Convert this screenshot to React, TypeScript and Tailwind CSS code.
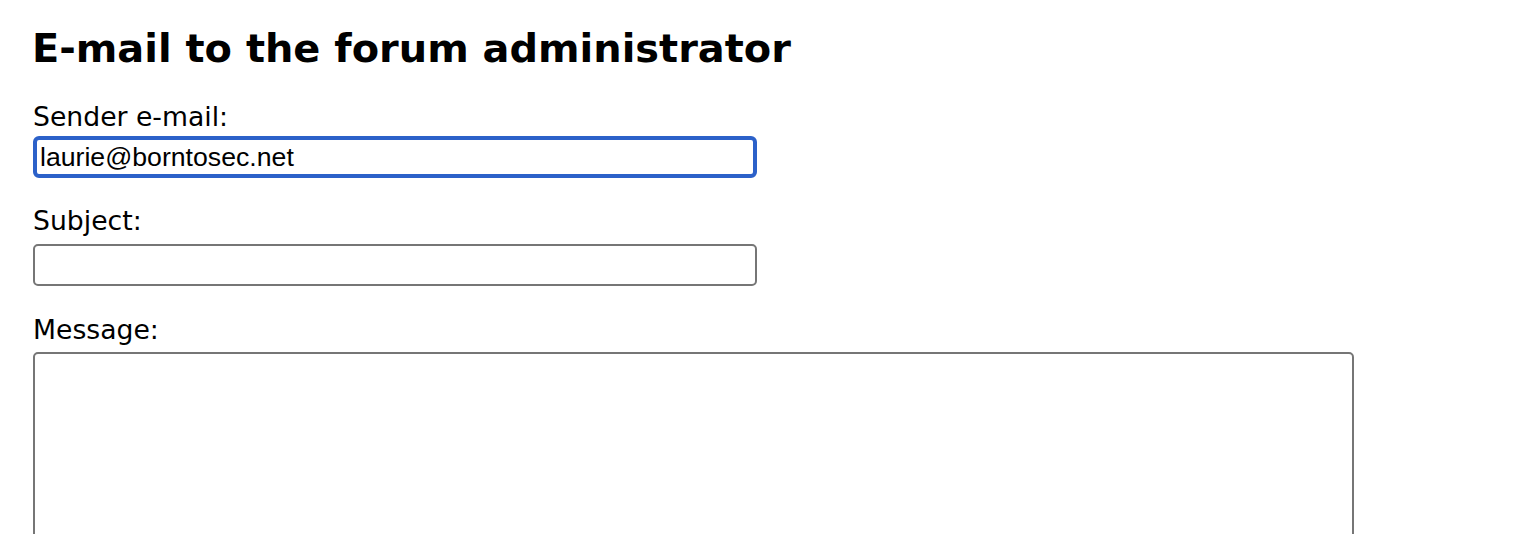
export default function App() {
  const labelCls =
    "block text-[26.67px] leading-[31px] text-black font-['DejaVu_Sans',Verdana,sans-serif]";
  const fieldCls =
    "block bg-white text-black text-[26.67px] font-['Liberation_Sans',Arial,sans-serif] outline-none";

  return (
    <div className="min-h-screen bg-white pl-[33px]">
      <h2 className="mt-[24px] -ml-px text-[39.9px] leading-[48px] font-bold text-black font-['DejaVu_Sans',Verdana,sans-serif]">
        E-mail to the forum administrator
      </h2>

      <form>
        {/* Sender */}
        <label htmlFor="sender" className={`${labelCls} mt-[29px]`}>
          Sender e-mail:
        </label>
        <input
          id="sender"
          type="text"
          defaultValue="laurie@borntosec.net"
          className={`${fieldCls} mt-[4px] h-[42px] w-[724px] rounded-[6px] border-[4px] border-[#2c61c9] pl-[3px] leading-[34px]`}
        />

        {/* Subject */}
        <label htmlFor="subject" className={`${labelCls} mt-[27px]`}>
          Subject:
        </label>
        <input
          id="subject"
          type="text"
          className={`${fieldCls} mt-[8px] h-[42px] w-[724px] rounded-[5px] border-2 border-[#767676] px-[5px]`}
        />

        {/* Message */}
        <label htmlFor="message" className={`${labelCls} mt-[28px]`}>
          Message:
        </label>
        <textarea
          id="message"
          className={`${fieldCls} mt-[7px] h-[200px] w-[1321px] resize-none rounded-[5px] border-2 border-[#767676] p-[4px]`}
        />
      </form>
    </div>
  );
}
